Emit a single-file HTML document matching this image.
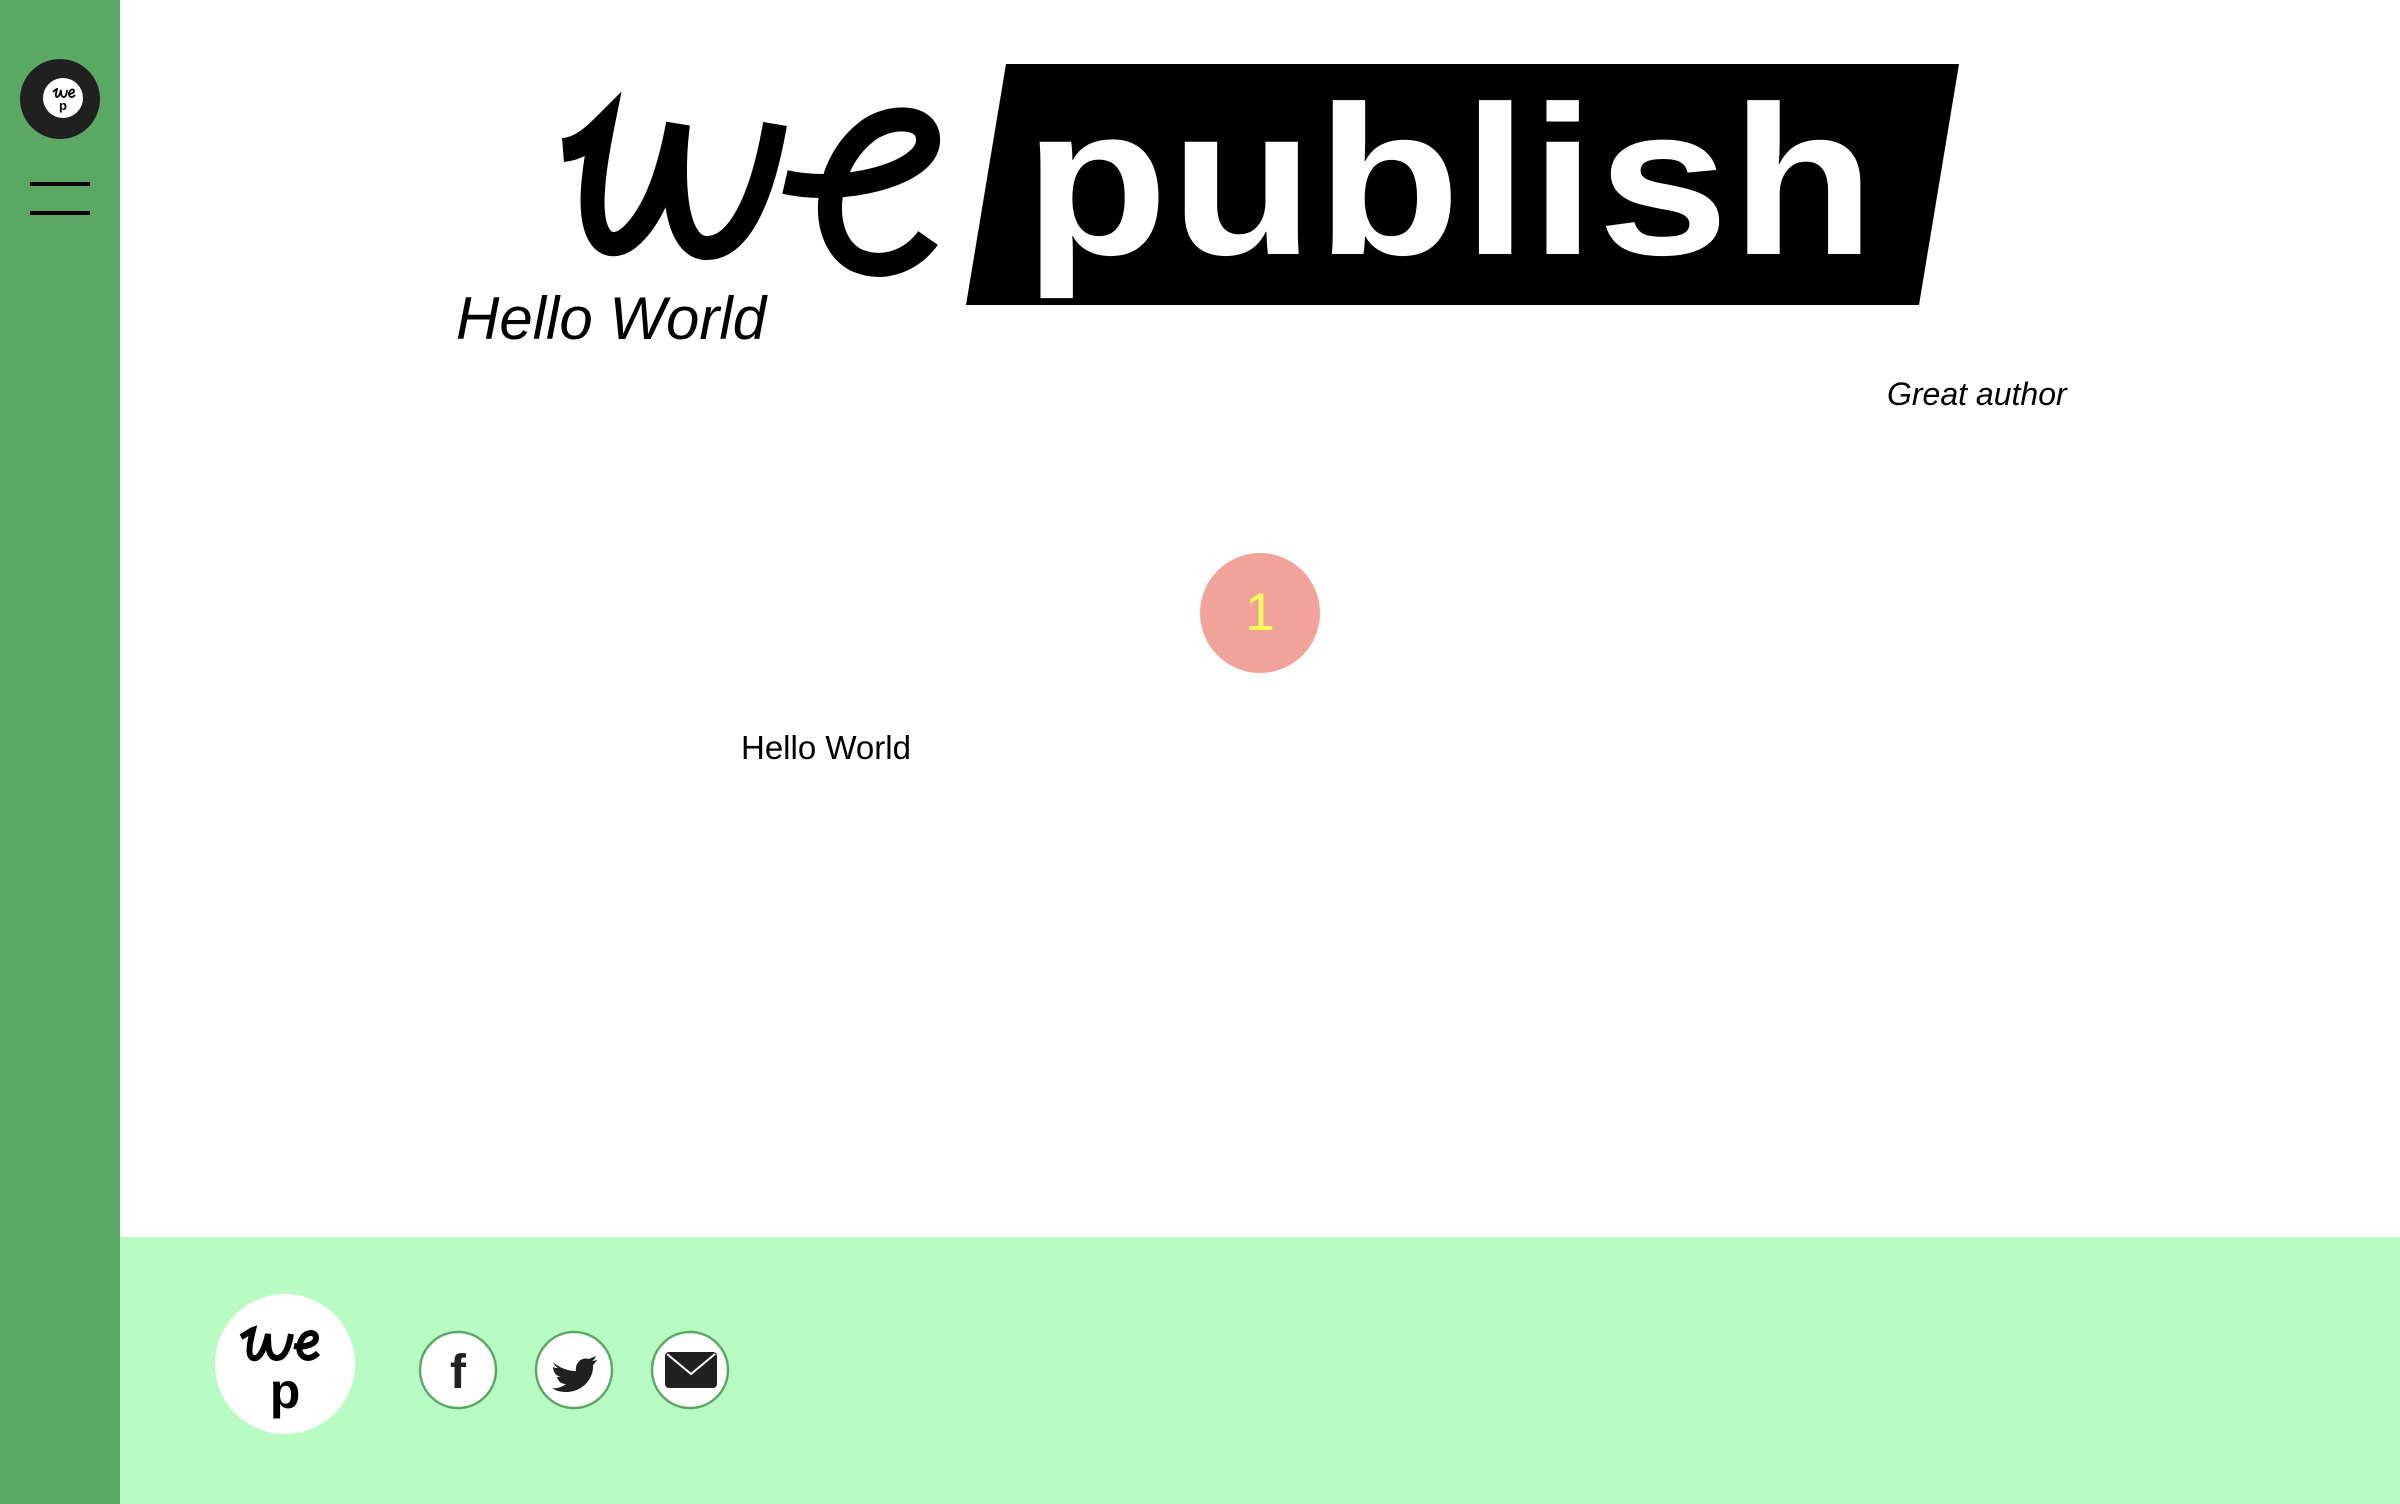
<!DOCTYPE html>
<html><head><meta charset="utf-8"><style>
html,body{margin:0;padding:0;width:2400px;height:1504px;overflow:hidden;background:#fff;font-family:"Liberation Sans",sans-serif;position:relative}
.abs{position:absolute}
</style></head><body>
<div class="abs" style="left:0;top:0;width:120px;height:1504px;background:#5ba865"></div>
<div class="abs" style="left:20px;top:59px;width:80px;height:80px;border-radius:50%;background:#202020"></div>
<div class="abs" style="left:43px;top:78px;width:40px;height:40px;border-radius:50%;background:#fff"></div>
<svg class="abs" style="left:43px;top:78px" width="40" height="40" viewBox="0 0 40 40">
<path d="M10,14 C12,12 13,11 14,11 C13,15 12,19 14,19 C16,19 17,16 18,12 C18,16 18,19 21,19 C23,19 24,15 24,12" fill="none" stroke="#000" stroke-width="1.8"/>
<path d="M25,16 C28,16 31,15 31,13 C31,11 28,11 27,13 C25,16 26,19 29,19 C30,19 31,18 32,17" fill="none" stroke="#000" stroke-width="1.8"/>
<text x="20" y="32" text-anchor="middle" font-family="Liberation Sans" font-weight="bold" font-size="13">p</text>
</svg>
<div class="abs" style="left:30px;top:182px;width:60px;height:4px;background:#000"></div>
<div class="abs" style="left:30px;top:211px;width:60px;height:4px;background:#000"></div>

<svg class="abs" style="left:0;top:0" width="2400" height="360" viewBox="0 0 2400 360">
<polygon points="1006,64 1959,64 1919,305 966,305" fill="#000"/>
<g transform="translate(0,254) scale(1,0.9) translate(0,-254)">
<text x="1024" y="254" fill="#fff" font-family="Liberation Sans" font-weight="bold" font-size="236" letter-spacing="2">publish</text>
</g>
<path d="M563,150 C576,149 588,142 602,128 C594,168 585,222 603,240 C620,255 645,228 660,190 C670,165 675,140 678,124 C672,170 672,245 705,248 C738,250 762,200 775,124" fill="none" stroke="#000" stroke-width="24" stroke-linecap="butt"/>
<path d="M785,182 C842,195 925,175 928,142 C930,112 885,115 865,133 C822,168 818,240 856,260 C886,273 914,258 928,238" fill="none" stroke="#000" stroke-width="24"/>
<text x="456" y="339" font-family="Liberation Sans" font-style="italic" font-size="60" fill="#000">Hello World</text>
</svg>

<div class="abs" style="left:1887px;top:374px;font-size:32px;font-style:italic;line-height:40px">Great author</div>

<div class="abs" style="left:1200px;top:553px;width:120px;height:120px;border-radius:50%;background:#f1a39a;color:#ffff55;font-size:53px;line-height:120px;text-align:center">1</div>

<div class="abs" style="left:741px;top:728px;font-size:33px;line-height:40px">Hello World</div>

<div class="abs" style="left:120px;top:1237px;width:2280px;height:267px;background:#b8fcc3"></div>
<div class="abs" style="left:215px;top:1294px;width:140px;height:140px;border-radius:50%;background:#fff"></div>
<svg class="abs" style="left:215px;top:1294px" width="140" height="140" viewBox="0 0 140 140">
<path d="M26,43 C32,40 35,37 38,36 C35,48 32,62 38,64 C44,66 50,55 53,40 C53,52 53,64 62,64 C70,64 74,52 76,40" fill="none" stroke="#000" stroke-width="6"/>
<path d="M79,52 C90,54 101,50 101,44 C101,37 92,38 88,43 C82,52 83,63 93,64 C97,64 100,62 103,59" fill="none" stroke="#000" stroke-width="6"/>
<text x="70" y="114" text-anchor="middle" font-family="Liberation Sans" font-weight="bold" font-size="50">p</text>
</svg>
<svg class="abs" style="left:0;top:1290px" width="800" height="160" viewBox="0 1290 800 160">
<g fill="#fff" stroke="#5ba865" stroke-width="2.5">
<circle cx="458" cy="1370" r="38"/><circle cx="574" cy="1370" r="38"/><circle cx="690" cy="1370" r="38"/>
</g>
<text x="458" y="1388" text-anchor="middle" font-family="Liberation Sans" font-weight="bold" font-size="48" fill="#202020">f</text>
<path fill="#202020" d="M554,1363 C560,1368 568,1371 576,1371 C575,1362 582,1357 589,1359 C591,1358 594,1357 596,1356 C595,1358 594,1360 592,1361 C594,1361 596,1360 597,1360 C596,1362 594,1364 593,1365 C594,1378 583,1392 566,1392 C561,1392 556,1391 552,1388 C557,1389 562,1387 566,1384 C561,1384 558,1381 557,1377 C558,1377 560,1377 561,1377 C556,1376 553,1372 553,1367 C555,1368 556,1368 558,1368 C554,1366 552,1360 554,1363 Z"/>
<rect x="665" y="1352" width="52" height="36" rx="4" fill="#202020"/>
<path d="M667,1354 L691,1374 L715,1354" fill="none" stroke="#fff" stroke-width="2"/>
</svg>
</body></html>
